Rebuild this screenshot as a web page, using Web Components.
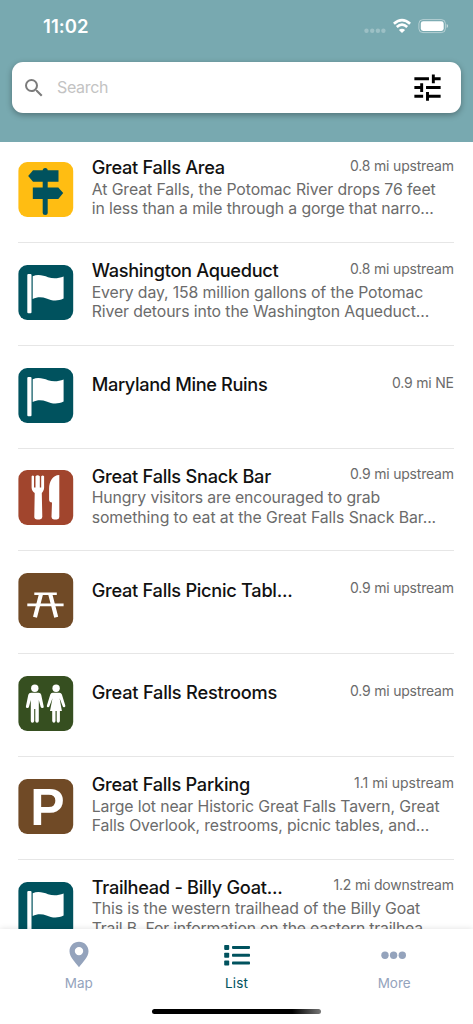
<!DOCTYPE html>
<html lang="en">
<head>
<meta charset="utf-8">
<title>Places</title>
<style>
html,body{margin:0;height:100%;overflow:hidden;background:#fff}
body{font-family:Inter,"Liberation Sans",sans-serif}
</style>
</head>
<body>
<places-app></places-app>
<script>
const define = (name, html, after) => {
  const t = document.createElement('template');
  t.innerHTML = html;
  customElements.define(name, class extends HTMLElement {
    connectedCallback() {
      if (this.shadowRoot) return;
      this.attachShadow({mode: 'open'}).append(t.content.cloneNode(true));
      if (after) after(this, this.shadowRoot);
    }
  });
};

/* One line of text, tracked so that it fills the width given in w. */
define('fit-text', `<style>:host{display:block;white-space:nowrap}span{display:inline-block}</style><span></span>`, (el, root) => {
  const s = root.querySelector('span');
  s.textContent = el.getAttribute('text');
  const w = parseFloat(el.getAttribute('w'));
  if (w) {
    const d = (w - s.getBoundingClientRect().width) / (s.textContent.length - 1);
    s.style.letterSpacing = d + 'px';
    s.style.marginRight = -d + 'px';
  }
});

const art = {
  sign: ['#ffbd12', '<g fill="#00525e"><path d="M24.7 8.5Q24.7 6 27.2 6T29.7 8.500V50.500Q29.700 53 27.200 53T24.700 50.500Z"/><path d="M15 8.200H40.500V19.700H15L10.200 14Z"/><path d="M14.800 25.400H40.300L45.200 31.100L40.300 36.900H14.800Z"/></g>'],
  flag: ['#00525e', '<g fill="#fff"><rect x="9.300" y="9" width="4.200" height="39.300" rx="1"/><path d="M14.700 11.200C20 8.900 25.500 10.600 30 12.200C35.500 14.100 40.500 13.400 45.600 11.500V33.600C39 36.700 33.500 35.600 28.500 33.400C24 31.700 19 31.700 14.700 33.900Z"/></g>'],
  food: ['#a1452d', '<g fill="#fff"><path d="M13.600 6.200Q14.900 4.700 16 6.200V17.400H17.500V6.200Q19.500 4.200 21.800 6.200V17.400H23.200V6.200Q24.800 4.700 26.100 6.200V17.500C26.100 20.500 24.500 22 23.800 23L24.300 47Q24.200 49.400 21.600 49.400H19.200Q16.400 49.400 16.300 47L16.700 23C14.900 21.700 13.600 20 13.600 17.500Z"/><path d="M41.300 5C34.500 5.200 31.200 11.500 31.100 18.500V29.600Q31 32.200 34 32.400L33.500 47Q33.600 49.400 36 49.400H38.800Q41.300 49.300 41.300 47Z"/></g>'],
  picnic: ['#704a26', '<path d="M16.300 20.700H38.800M9.300 31.900H45.600" stroke="#fff" stroke-width="2.600"/><path d="M23 21L17 44.200M32.200 21L38.200 44.200" stroke="#fff" stroke-width="4.100"/>'],
  rest: ['#364f20', '<g fill="#fff"><circle cx="16.800" cy="12.300" r="3.700"/><path d="M13 16.700H20.600Q22.700 16.700 23.200 18.800L25.700 30.500Q25.900 32 24.500 32.100T22.700 31L20.800 24V45Q20.700 46.800 19 46.800T17.300 45V33H16.200V45Q16.100 46.800 14.400 46.800T12.800 45V24L10.900 31Q10.600 32.200 9.200 32.100T7.900 30.500L10.300 18.800Q10.900 16.700 13 16.700Z"/><circle cx="38.100" cy="12.300" r="3.700"/><path d="M34.500 16.700H41.600Q43.200 16.700 43.900 18.500L47.300 29.500Q47.600 31.100 46.300 31.300T44.600 30.100L41.600 22.200L43.900 35H41.900V45Q41.700 46.800 40.200 46.800T38.700 45V35H37.500V45Q37.300 46.800 35.900 46.800T34.200 45V35H32L34.500 22.200L31.500 30.100Q31.100 31.500 29.800 31.300T28.900 29.500L32.300 18.500Q32.900 16.700 34.500 16.700Z"/></g>'],
  park: ['#704a26', '<text x="12.200" y="46.200" font-family="Liberation Sans,sans-serif" font-weight="700" font-size="51.500" fill="#fff">P</text>']
};
define('place-icon', `<style>:host{display:block;flex:none;width:55px;height:55px}svg{display:block;overflow:visible}</style><svg width="55" height="55" viewBox="0 0 55 55" fill="none"></svg>`, (el, root) => {
  const [bg, g] = art[el.getAttribute('kind')];
  root.querySelector('svg').innerHTML = `<rect x=".4" y=".1" width="54.800" height="54.800" rx="8.800" fill="${bg}"/>${g}`;
});

define('place-row', `<style>
:host{display:block;height:102.800px;box-sizing:border-box;padding:0 19px 0 18.300px}
.row{height:100%;box-sizing:border-box;border-bottom:1px solid #e6e6e6;display:flex;gap:18.400px;padding-top:21.900px}
.body{flex:1;min-width:0;margin-top:-6.200px}
:host([plain]) .body{margin-top:5.200px}
.top{display:flex;justify-content:space-between;align-items:flex-start;height:24px}
.title{font-size:18.200px;line-height:24px;font-weight:500;color:#111;margin-top:-.7px}
.dist{font-size:14px;line-height:20px;color:#6b6b6b}
.desc{font-size:15.800px;line-height:19.500px;color:#6b6b6b}
</style><div class="row"><slot name="icon"></slot><div class="body"><div class="top"></div></div></div>`, (el, root) => {
  const [title, tw, dist, dw, ...lines] = el.data;
  const put = (parent, cls, text, w) => {
    const box = document.createElement('div');
    box.className = cls;
    box.innerHTML = `<fit-text w="${w}"></fit-text>`;
    box.firstChild.setAttribute('text', text);
    parent.append(box);
  };
  const icon = document.createElement('place-icon');
  icon.slot = 'icon';
  icon.setAttribute('kind', el.getAttribute('kind'));
  el.append(icon);
  const top = root.querySelector('.top');
  put(top, 'title', title, tw);
  put(top, 'dist', dist, dw);
  const body = root.querySelector('.body');
  for (let i = 0; i < lines.length; i += 2) put(body, 'desc', lines[i], lines[i + 1]);
});

const places = [
  ['sign', 'Great Falls Area', 133.500, '0.8 mi upstream', 104, 'At Great Falls, the Potomac River drops 76 feet', 344, 'in less than a mile through a gorge that narro...', 342],
  ['flag', 'Washington Aqueduct', 187, '0.8 mi upstream', 104, 'Every day, 158 million gallons of the Potomac', 331.500, 'River detours into the Washington Aqueduct...', 337.500],
  ['flag', 'Maryland Mine Ruins', 176, '0.9 mi NE', 62],
  ['food', 'Great Falls Snack Bar', 179.500, '0.9 mi upstream', 104, 'Hungry visitors are encouraged to grab', 288.500, 'something to eat at the Great Falls Snack Bar...', 344.500],
  ['picnic', 'Great Falls Picnic Tabl...', 201, '0.9 mi upstream', 104],
  ['rest', 'Great Falls Restrooms', 185.500, '0.9 mi upstream', 104],
  ['park', 'Great Falls Parking', 158.500, '1.1 mi upstream', 100, 'Large lot near Historic Great Falls Tavern, Great', 348, 'Falls Overlook, restrooms, picnic tables, and...', 337.500],
  ['flag', 'Trailhead - Billy Goat...', 191, '1.2 mi downstream', 120.500, 'This is the western trailhead of the Billy Goat', 328.500, 'Trail B. For information on the eastern trailhea...', 344.500]
];
define('place-list', `<style>:host{display:block;flex:1;min-height:0;overflow:hidden}.in{margin-top:-1.900px}</style><div class="in"></div>`, (el, root) => {
  for (const [kind, ...data] of places) {
    const r = document.createElement('place-row');
    r.setAttribute('kind', kind);
    if (data.length < 5) r.setAttribute('plain', '');
    r.data = data;
    root.querySelector('.in').append(r);
  }
});

define('status-bar', `<style>
:host{display:flex;height:62px;box-sizing:border-box;padding:15px 25px 0 43px;justify-content:space-between;color:#fff}
.t{font-size:18.500px;line-height:23px;font-weight:600}svg{display:block}
</style><fit-text class="t" text="11:02" w="45.500"></fit-text>
<svg width="86" height="24" viewBox="0 0 86 24" fill="none">
<g fill="#fff" fill-opacity=".27"><circle cx="4.500" cy="15.800" r="2.200"/><circle cx="10.200" cy="15.800" r="2.200"/><circle cx="15.900" cy="15.800" r="2.200"/><circle cx="21.400" cy="15.800" r="2.200"/></g>
<g stroke="#fff" stroke-width="2.700"><path d="M31.900 8.800Q40 1.600 48.100 8.800"/><path d="M34.800 12Q40 7.400 45.200 12"/></g><path d="M36.900 14.900Q40 12.500 43.100 14.900L40 18Z" fill="#fff"/>
<rect x="56.900" y="4.600" width="26.500" height="13" rx="4" stroke="#fff" stroke-opacity=".45"/><rect x="58.800" y="6.300" width="22.900" height="9.600" rx="2.400" fill="#fff"/><path d="M84.700 9.100Q86 9.600 86 11T84.700 13Z" fill="#fff" fill-opacity=".6"/>
</svg>`);

define('search-box', `<style>
:host{display:flex;align-items:center;height:51.300px;box-sizing:border-box;margin:0 11.700px;padding:0 16.600px 0 10.600px;border-radius:11px;background:#fff;box-shadow:0 2px 6px rgba(0,0,0,.33)}
svg{display:block;flex:none}.p{font-size:16px;line-height:20px;color:#c3c3c3;flex:1;margin:-1px 0 0 10.700px}
</style>
<svg width="24" height="24" viewBox="0 0 24 24"><path fill="#7c7c7c" d="M15.500 14h-.79l-.28-.27A6.471 6.471 0 0 0 16 9.500 6.500 6.500 0 1 0 9.500 16c1.610 0 3.090-.59 4.230-1.570l.27.28v.79l5 4.990L20.490 19l-4.990-5zm-6 0C7.010 14 5 11.990 5 9.500S7.010 5 9.500 5 14 7.010 14 9.500 11.990 14 9.500 14z"/></svg>
<fit-text class="p" text="Search" w="51.500"></fit-text>
<svg width="35" height="35" viewBox="0 0 24 24"><path d="M3 17v2h6v-2H3zM3 5v2h10V5H3zm10 16v-2h8v-2h-8v-2h-2v6h2zM7 9v2H3v2h4v2h2V9H7zm14 4v-2H11v2h10zm-6-4h2V7h4V5h-4V3h-2v6z"/></svg>`);

define('app-header', `<style>:host{display:block;flex:none;height:142px;background:#78a9b0;position:relative}</style><status-bar></status-bar><search-box></search-box>`);

define('tab-item', `<style>
:host{display:flex;flex:1;flex-direction:column;align-items:center;color:#94a3bc}
:host([active]) {color:#00525e}
.l{font-size:13.500px;line-height:18px;margin-top:5px}
::slotted(svg){display:block}
</style><slot></slot><fit-text class="l"></fit-text>`, (el, root) => {
  const old = root.querySelector('.l'), l = document.createElement('fit-text');
  l.className = 'l';
  l.setAttribute('text', el.getAttribute('label'));
  l.setAttribute('w', el.getAttribute('w'));
  old.replaceWith(l);
});

define('tab-bar', `<style>
:host{display:flex;flex-direction:column;flex:none;height:95px;background:#fff;position:relative;box-shadow:0 0 6px rgba(0,0,0,.13)}
nav{display:flex;padding-top:10px}
.home{width:169px;height:5.600px;border-radius:3px;margin:auto auto 9.600px;background:linear-gradient(90deg,#000 83%,#777)}
</style><nav>
<tab-item label="Map" w="28"><svg width="32" height="30" viewBox="0 0 32 30"><path fill="currentColor" fill-rule="evenodd" d="M16 2.800C10.600 2.800 6.500 7 6.500 12.200C6.500 18.500 12.800 23.500 16 28.300C19.200 23.500 25.500 18.500 25.500 12.200C25.500 7 21.400 2.800 16 2.800ZM16 7.900A4.200 4.200 0 1 1 16 16.300A4.200 4.200 0 1 1 16 7.900Z"/></svg></tab-item>
<tab-item active label="List" w="23"><svg width="32" height="30" viewBox="0 0 32 30" fill="currentColor"><rect x="3.200" y="5.900" width="5" height="5" rx=".8"/><rect x="3.200" y="13.700" width="5" height="5" rx=".8"/><rect x="3.200" y="21.600" width="5" height="5" rx=".8"/><rect x="11" y="6.900" width="18" height="3" rx=".8"/><rect x="11" y="14.700" width="18" height="3" rx=".8"/><rect x="11" y="22.500" width="18" height="3" rx=".8"/></svg></tab-item>
<tab-item label="More" w="33"><svg width="32" height="30" viewBox="0 0 32 30" fill="currentColor"><circle cx="7" cy="16.200" r="3.700"/><circle cx="15.600" cy="16.200" r="3.700"/><circle cx="24.300" cy="16.200" r="3.700"/></svg></tab-item>
</nav><div class="home"></div>`);

define('places-app', `<style>:host{display:flex;flex-direction:column;height:100vh;overflow:hidden;background:#fff}</style><app-header></app-header><place-list></place-list><tab-bar></tab-bar>`);
</script>
</body>
</html>
